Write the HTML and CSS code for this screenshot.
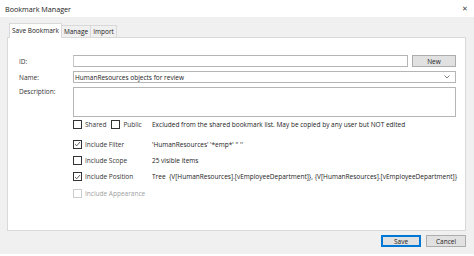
FILE: index.html
```html
<!DOCTYPE html>
<html>
<head>
<meta charset="utf-8">
<link rel="stylesheet" href="styles.css">
</head>
<body>
<div class="window">
  <div class="titlebar">
    <span class="title">Bookmark Manager</span>
    <span class="close">&#x2715;</span>
  </div>
  <div class="tabs">
    <div class="tab active">Save Bookmark</div>
    <div class="tab">Manage</div>
    <div class="tab">Import</div>
  </div>
  <div class="panel">
    <div class="row row-id">
      <label class="lbl">ID:</label>
      <div class="field id-field"></div>
      <button class="btn btn-new">New</button>
    </div>
    <div class="row row-name">
      <label class="lbl">Name:</label>
      <div class="field combo">
        <span>HumanResources objects for review</span>
        <svg class="chev" width="6" height="4" viewBox="0 0 6 4"><path d="M0.5 0.5 L3 3 L5.5 0.5" fill="none" stroke="#606060" stroke-width="0.8"/></svg>
      </div>
    </div>
    <div class="row row-desc">
      <label class="lbl">Description:</label>
      <div class="field desc"></div>
    </div>
    <div class="row row-share">
      <div class="lbl"></div>
      <div class="opts">
        <span class="cb"></span><span class="cbtext">Shared</span>
        <span class="cb cb-public"></span><span class="cbtext">Public</span>
      </div>
      <span class="note">Excluded from the shared bookmark list. May be copied by any user but NOT edited</span>
    </div>
    <div class="inc">
      <div class="irow">
        <div class="lbl"></div>
        <div class="opts"><span class="cb checked"><svg width="8" height="8" viewBox="0 0 8 8"><path d="M1.2 4.2 L3.2 6 L6.8 1.8" fill="none" stroke="#333" stroke-width="0.9"/></svg></span><span class="cbtext">Include Filter</span></div>
        <span class="note">'HumanResources' '*emp*' '' ''</span>
      </div>
      <div class="irow">
        <div class="lbl"></div>
        <div class="opts"><span class="cb"></span><span class="cbtext">Include Scope</span></div>
        <span class="note">25 visible items</span>
      </div>
      <div class="irow">
        <div class="lbl"></div>
        <div class="opts"><span class="cb checked"><svg width="8" height="8" viewBox="0 0 8 8"><path d="M1.2 4.2 L3.2 6 L6.8 1.8" fill="none" stroke="#333" stroke-width="0.9"/></svg></span><span class="cbtext">Include Position</span></div>
        <span class="note">Tree&nbsp; {V[HumanResources].[vEmployeeDepartment]}, {V[HumanResources].[vEmployeeDepartment]}</span>
      </div>
      <div class="irow">
        <div class="lbl"></div>
        <div class="opts disabled"><span class="cb"></span><span class="cbtext">Include Appearance</span></div>
      </div>
    </div>
  </div>
  <div class="footer">
    <button class="btn btn-save">Save</button>
    <button class="btn btn-cancel">Cancel</button>
  </div>
</div>
</body>
</html>
```
FILE: styles.css
```css
* { box-sizing: border-box; }
html, body { margin: 0; padding: 0; }
body {
  width: 474px;
  height: 256px;
  background: #fff;
  font-family: "Open Sans", "Noto Sans", sans-serif;
  font-size: 6.5px;
  color: #333;
  overflow: hidden;
}
.window {
  height: 254px;
  background: #f0f0f0;
  display: flex;
  flex-direction: column;
}
.titlebar {
  height: 17px;
  background: #fff;
  display: flex;
  align-items: center;
  justify-content: space-between;
  padding: 0 6px 0 5px;
}
.title { font-size: 7.2px; color: #222; }
.close { font-size: 7px; color: #444; }
.tabs {
  display: flex;
  align-items: flex-end;
  margin-top: 6px;
  padding-left: 9px;
  height: 14px;
}
.tab {
  height: 12px;
  padding: 0 2px;
  line-height: 11px;
  border: 1px solid #d9d9d9;
  border-bottom: none;
  border-left: none;
  background: #f0f0f0;
  color: #222;
}
.tab.active {
  height: 15px;
  line-height: 13px;
  background: #fff;
  border-left: 1px solid #d9d9d9;
  margin-bottom: -1px;
  position: relative;
  padding: 0 2px;
}
.panel {
  margin: 0 8px 0 7px;
  height: 194px;
  background: #fff;
  border: 1px solid #d9d9d9;
  padding: 17px 9px 0 11px;
}
.row { display: flex; align-items: center; }
.lbl { width: 54px; flex: none; color: #333; }
.field {
  flex: 1;
  border: 1px solid #b5b5b5;
  background: #fff;
}
.row-id .field { height: 12px; border-left-color: #c8c8c8; }
.btn {
  font-family: inherit;
  font-size: 6.5px;
  color: #222;
  background: #e1e1e1;
  border: 1px solid #adadad;
  padding: 0;
  margin: 0;
}
.btn-new { width: 44px; height: 12px; margin-left: 4px; }
.row-name { margin-top: 4px; }
.combo {
  height: 12px;
  display: flex;
  align-items: center;
  justify-content: space-between;
  padding: 0 5px 0 1px;
  color: #222;
}
.chev { display: block; }
.row-desc { margin-top: 4px; align-items: flex-start; }
.desc { height: 30px; }
.row-share { margin-top: 1px; height: 12px; }
.opts { display: flex; align-items: center; width: 79px; flex: none; }
.cb {
  width: 9px;
  height: 9px;
  border: 1px solid #333;
  background: #fff;
  flex: none;
  display: flex;
  align-items: center;
  justify-content: center;
}
.cb svg { display: block; }
.cbtext { margin-left: 3px; }
.cb-public { margin-left: 5px; }
.note { color: #222; white-space: nowrap; }
.inc { margin-top: 6px; display: flex; flex-direction: column; }
.irow { display: flex; align-items: center; height: 16.3px; }
.disabled .cb { border-color: #ccc; }
.disabled .cbtext { color: #a0a0a0; }
.footer {
  display: flex;
  justify-content: flex-end;
  gap: 5px;
  padding: 4px 8px 0 0;
}
.btn-save { width: 40px; height: 12px; border: 1px solid #0078d7; box-shadow: inset 0 0 0 1px #0078d7; }
.btn-cancel { width: 40px; height: 12px; }
```
